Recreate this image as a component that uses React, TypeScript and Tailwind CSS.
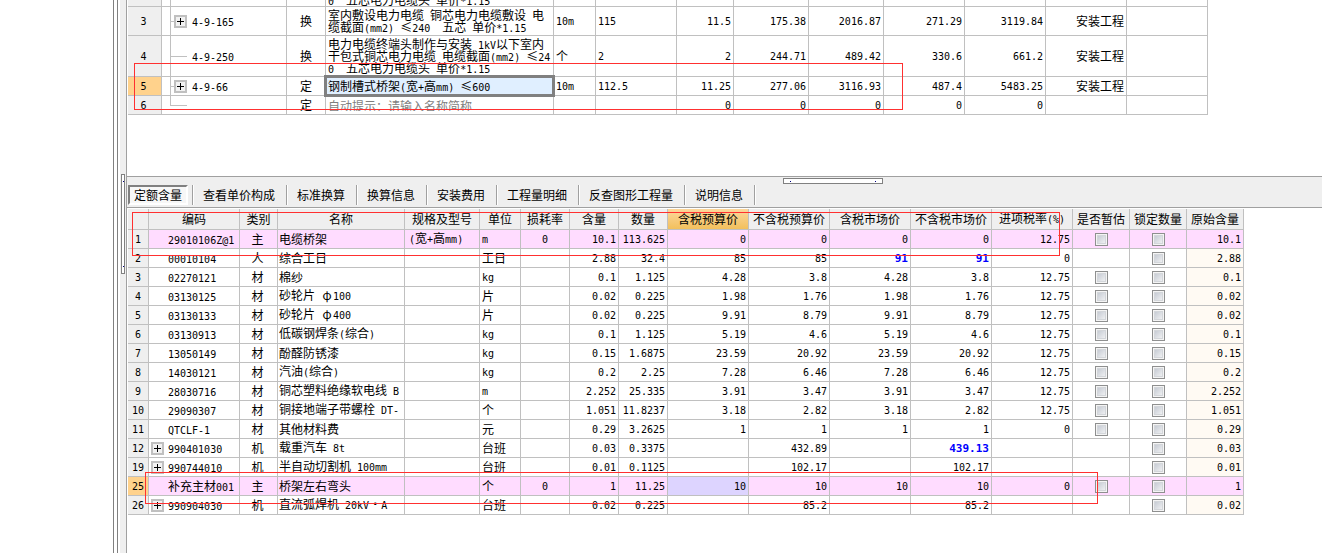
import React from 'react';
import clsx from 'clsx';

type QuotaRow = {
    no: string;
    code: string;
    kind: string;
    name: string[];
    unit: string;
    expr: string;
    nums: string[];
    category: string;
    height: string;
    expandable?: boolean;
    selected?: boolean;
};

type MaterialRow = {
    no: string;
    code: string;
    kind: string;
    name: string;
    spec?: string;
    unit: string;
    loss?: string;
    content: string;
    qty: string;
    prices: string[];
    tax: string;
    estimate?: boolean;
    origin: string;
    main?: boolean;
    selected?: boolean;
    expandable?: boolean;
};

const quotaRows: QuotaRow[] = [
    { no: '3', code: '4-9-165', kind: '换', name: ['室内敷设电力电缆 铜芯电力电缆敷设 电', '缆截面(mm2) ≤240  五芯 单价*1.15'], unit: '10m', expr: '115', nums: ['11.5', '175.38', '2016.87', '271.29', '3119.84'], category: '安装工程', height: 'h-[29px]', expandable: true },
    { no: '4', code: '4-9-250', kind: '换', name: ['电力电缆终端头制作与安装 1kV以下室内', '干包式铜芯电力电缆 电缆截面(mm2) ≤24', '0  五芯电力电缆头 单价*1.15'], unit: '个', expr: '2', nums: ['2', '244.71', '489.42', '330.6', '661.2'], category: '安装工程', height: 'h-[41px]' },
    { no: '5', code: '4-9-66', kind: '定', name: ['钢制槽式桥架(宽+高mm) ≤600'], unit: '10m', expr: '112.5', nums: ['11.25', '277.06', '3116.93', '487.4', '5483.25'], category: '安装工程', height: 'h-[19px]', expandable: true, selected: true },
    { no: '6', code: '', kind: '定', name: [], unit: '', expr: '', nums: ['0', '0', '0', '0', '0'], category: '', height: 'h-[19px]' },
];

const materialRows: MaterialRow[] = [
    { no: '1', code: '29010106Z@1', kind: '主', name: '电缆桥架', spec: '(宽+高mm)', unit: 'm', loss: '0', content: '10.1', qty: '113.625', prices: ['0', '0', '0', '0'], tax: '12.75', estimate: true, origin: '10.1', main: true },
    { no: '2', code: '00010104', kind: '人', name: '综合工日', unit: '工日', content: '2.88', qty: '32.4', prices: ['85', '85', '*91', '*91'], tax: '0', origin: '2.88' },
    { no: '3', code: '02270121', kind: '材', name: '棉纱', unit: 'kg', content: '0.1', qty: '1.125', prices: ['4.28', '3.8', '4.28', '3.8'], tax: '12.75', estimate: true, origin: '0.1' },
    { no: '4', code: '03130125', kind: '材', name: '砂轮片 φ100', unit: '片', content: '0.02', qty: '0.225', prices: ['1.98', '1.76', '1.98', '1.76'], tax: '12.75', estimate: true, origin: '0.02' },
    { no: '5', code: '03130133', kind: '材', name: '砂轮片 φ400', unit: '片', content: '0.02', qty: '0.225', prices: ['9.91', '8.79', '9.91', '8.79'], tax: '12.75', estimate: true, origin: '0.02' },
    { no: '6', code: '03130913', kind: '材', name: '低碳钢焊条(综合)', unit: 'kg', content: '0.1', qty: '1.125', prices: ['5.19', '4.6', '5.19', '4.6'], tax: '12.75', estimate: true, origin: '0.1' },
    { no: '7', code: '13050149', kind: '材', name: '酚醛防锈漆', unit: 'kg', content: '0.15', qty: '1.6875', prices: ['23.59', '20.92', '23.59', '20.92'], tax: '12.75', estimate: true, origin: '0.15' },
    { no: '8', code: '14030121', kind: '材', name: '汽油(综合)', unit: 'kg', content: '0.2', qty: '2.25', prices: ['7.28', '6.46', '7.28', '6.46'], tax: '12.75', estimate: true, origin: '0.2' },
    { no: '9', code: '28030716', kind: '材', name: '铜芯塑料绝缘软电线 B', unit: 'm', content: '2.252', qty: '25.335', prices: ['3.91', '3.47', '3.91', '3.47'], tax: '12.75', estimate: true, origin: '2.252' },
    { no: '10', code: '29090307', kind: '材', name: '铜接地端子带螺栓 DT-', unit: '个', content: '1.051', qty: '11.8237', prices: ['3.18', '2.82', '3.18', '2.82'], tax: '12.75', estimate: true, origin: '1.051' },
    { no: '11', code: 'QTCLF-1', kind: '材', name: '其他材料费', unit: '元', content: '0.29', qty: '3.2625', prices: ['1', '1', '1', '1'], tax: '0', estimate: true, origin: '0.29' },
    { no: '12', code: '990401030', kind: '机', name: '载重汽车 8t', unit: '台班', content: '0.03', qty: '0.3375', prices: ['', '432.89', '', '*439.13'], tax: '', origin: '0.03', expandable: true },
    { no: '19', code: '990744010', kind: '机', name: '半自动切割机 100mm', unit: '台班', content: '0.01', qty: '0.1125', prices: ['', '102.17', '', '102.17'], tax: '', origin: '0.01', expandable: true },
    { no: '25', code: '补充主材001', kind: '主', name: '桥架左右弯头', unit: '个', loss: '0', content: '1', qty: '11.25', prices: ['10', '10', '10', '10'], tax: '0', estimate: true, origin: '1', main: true, selected: true },
    { no: '26', code: '990904030', kind: '机', name: '直流弧焊机 20kV·A', unit: '台班', content: '0.02', qty: '0.225', prices: ['', '85.2', '', '85.2'], tax: '', origin: '0.02', expandable: true },
];

const tabs = ['定额含量', '查看单价构成', '标准换算', '换算信息', '安装费用', '工程量明细', '反查图形工程量', '说明信息'];

const headers = ['', '编码', '类别', '名称', '规格及型号', '单位', '损耗率', '含量', '数量', '含税预算价', '不含税预算价', '含税市场价', '不含税市场价', '进项税率(%)', '是否暂估', '锁定数量', '原始含量'];

const cell = 'border-r border-b border-[#c0c0c0] p-0 whitespace-pre align-middle';
const left = 'pl-0.5';
const right = 'pr-0.5 text-right';

// Half-width runs take one half of a 12px Chinese character each
const T = ({ children, changed }: { children: string; changed?: boolean }) => (
    <>
        {(children.match(/[\x20-\x7e]+|[≤φ·]|[^\x20-\x7e≤φ·]+/g) || []).map((part, i) => {
            if (/^[\x20-\x7e]/.test(part)) {
                return (
                    <span key={i} className={clsx("font-['DejaVu_Sans_Mono',monospace] leading-[12px]", changed ? 'text-[11px] font-bold text-[#0000ff]' : 'text-[10px]')}>
                        {part}
                    </span>
                );
            }
            if (/^[≤φ·]/.test(part)) {
                return <span key={i} className="inline-block w-3 text-center">{part}</span>;
            }
            return <span key={i}>{part}</span>;
        })}
    </>
);

const Expander = ({ label }: { label: string }) => (
    <button type="button" aria-label={label} className="block w-[13px] h-[13px] shrink-0 border-2 border-[#c0c0c0] bg-[#f2f2f2]">
        <svg viewBox="0 0 9 9" className="block w-[9px] h-[9px]" shapeRendering="crispEdges">
            <path d="M1 4h7v1H1zM4 1h1v7H4z" fill="#000" />
        </svg>
    </button>
);

const Check = ({ label }: { label: string }) => (
    <input
        type="checkbox"
        aria-label={label}
        className="block mx-auto appearance-none w-[13px] h-[13px] border border-[#8e8f8f] bg-linear-to-br from-[#bcc2cc] to-[#fafafa] shadow-[inset_0_0_0_1px_#f4f4f4,inset_0_0_0_2px_#d3d6da]"
    />
);

const QuotaTable = () => (
    <table className="table-fixed w-[1080px] border-separate border-spacing-0">
        <colgroup>
            <col className="w-[34px]" />
            <col className="w-[125px]" />
            <col className="w-[39px]" />
            <col className="w-[228px]" />
            <col className="w-[42px]" />
            <col className="w-[81px]" />
            <col className="w-[57px]" />
            <col className="w-[75px]" />
            <col className="w-[75px]" />
            <col className="w-[81px]" />
            <col className="w-[81px]" />
            <col className="w-[81px]" />
            <col className="w-[81px]" />
        </colgroup>
        <tbody>
            {/* Tail of the row that is scrolled out of view */}
            <tr className="h-[7px]">
                <td className={clsx(cell, 'bg-[#efefef]')} />
                <td className={clsx(cell, 'relative')}>
                    <span className="absolute left-2 inset-y-0 border-l border-[#c0c0c0]" />
                </td>
                <td className={cell} />
                <td className={clsx(cell, left)}>
                    <div className="flex items-end h-[6px] overflow-hidden">
                        <span className="block h-3"><T>0  五芯电力电缆头 单价*1.15</T></span>
                    </div>
                </td>
                {Array.from({ length: 9 }, (_, i) => <td key={i} className={cell} />)}
            </tr>
            {quotaRows.map((row, index) => {
                const last = index === quotaRows.length - 1;
                return (
                    <tr key={row.no} className={row.height}>
                        <td className={clsx(cell, 'pr-0.5 text-center', row.selected ? 'bg-[#ffd28c]' : 'bg-[#efefef]')}><T>{row.no}</T></td>
                        <td className={clsx(cell, 'relative')}>
                            <span className={clsx('absolute left-2 top-0 border-l border-[#c0c0c0]', last ? 'bottom-1/2' : '-bottom-px')} />
                            <span className="absolute left-2 top-1/2 w-[17px] border-t border-[#c0c0c0]" />
                            <div className="relative flex items-center gap-1 pl-3">
                                {row.expandable ? <Expander label={`展开 ${row.code}`} /> : <span className="w-[13px]" />}
                                <span className="pl-px pt-px"><T>{row.code}</T></span>
                            </div>
                        </td>
                        <td className={clsx(cell, 'text-center')}>{row.kind}</td>
                        <td className={clsx(cell, left, 'relative', row.selected && 'bg-[#e0efff]')}>
                            {row.name.map((line) => <span key={line} className="block h-3"><T>{line}</T></span>)}
                            {last && (
                                <input aria-label="名称" placeholder="自动提示：请输入名称简称" className="block w-full h-3 p-0 bg-transparent outline-none placeholder:text-[#7f7f7f]" />
                            )}
                            {row.selected && <span className="absolute -inset-0.5 z-10 border-3 border-[#808080]" />}
                        </td>
                        <td className={clsx(cell, left)}><T>{row.unit}</T></td>
                        <td className={clsx(cell, left)}><T>{row.expr}</T></td>
                        {row.nums.map((n, i) => <td key={i} className={clsx(cell, right)}><T>{n}</T></td>)}
                        <td className={clsx(cell, right)}>{row.category}</td>
                        <td className={cell} />
                    </tr>
                );
            })}
        </tbody>
    </table>
);

const MaterialTable = () => (
    <table className="table-fixed w-[1116px] border-separate border-spacing-0">
        <colgroup>
            <col className="w-[21px]" />
            <col className="w-[91px]" />
            <col className="w-[38px]" />
            <col className="w-[127px]" />
            <col className="w-[75px]" />
            <col className="w-[41px]" />
            <col className="w-[49px]" />
            <col className="w-[49px]" />
            <col className="w-[49px]" />
            <col className="w-[81px]" />
            <col className="w-[81px]" />
            <col className="w-[81px]" />
            <col className="w-[81px]" />
            <col className="w-[81px]" />
            <col className="w-[57px]" />
            <col className="w-[57px]" />
            <col className="w-[57px]" />
        </colgroup>
        <thead>
            <tr className="h-[21px]">
                {headers.map((h) => (
                    <th key={h} scope="col" className={clsx(cell, 'text-center font-normal', h === '含税预算价' ? 'bg-linear-to-b from-[#fcd79b] to-[#f2c05c]' : 'bg-[#efefef]')}>
                        <T>{h}</T>
                    </th>
                ))}
            </tr>
        </thead>
        <tbody>
            {materialRows.map((row) => (
                <tr key={row.no} className={clsx('h-[19px]', row.main && 'bg-[#ffdcff]')}>
                    <td className={clsx(cell, 'text-center', row.selected ? 'bg-[#ffd28c]' : 'bg-[#efefef]')}><T>{row.no}</T></td>
                    <td className={clsx(cell, left)}>
                        <div className="flex items-center gap-1">
                            {row.expandable ? <Expander label={`展开 ${row.code}`} /> : <span className="w-[13px]" />}
                            <span className="pt-px"><T>{row.code}</T></span>
                        </div>
                    </td>
                    <td className={clsx(cell, 'pr-0.5 text-center')}>{row.kind}</td>
                    <td className={clsx(cell, 'pl-px')}><T>{row.name}</T></td>
                    <td className={clsx(cell, 'pl-1')}><T>{row.spec || ''}</T></td>
                    <td className={clsx(cell, left)}><T>{row.unit}</T></td>
                    <td className={clsx(cell, 'text-center')}><T>{row.loss || ''}</T></td>
                    <td className={clsx(cell, right)}><T>{row.content}</T></td>
                    <td className={clsx(cell, right)}><T>{row.qty}</T></td>
                    {row.prices.map((p, i) => (
                        <td key={i} className={clsx(cell, right, row.selected && i === 0 && 'bg-[#ddd4ff]')}>
                            <T changed={p.startsWith('*')}>{p.replace('*', '')}</T>
                        </td>
                    ))}
                    <td className={clsx(cell, right)}><T>{row.tax}</T></td>
                    <td className={cell}>{row.estimate && <Check label={`是否暂估 ${row.code}`} />}</td>
                    <td className={cell}><Check label={`锁定数量 ${row.code}`} /></td>
                    <td className={clsx(cell, right, !row.main && 'bg-[#fffaf3]')}><T>{row.origin}</T></td>
                </tr>
            ))}
        </tbody>
    </table>
);

export default function App() {
    return (
        <div className="relative flex min-h-screen overflow-hidden bg-white text-black text-[12px] leading-[12px] font-['Noto_Sans_CJK_SC',sans-serif]">
            {/* Left panel and splitter */}
            <aside className="w-[114px] shrink-0 border-r border-[#808080]" />
            <div className="w-1 shrink-0 border-r border-[#808080]" />
            <div className="w-[9px] shrink-0 border-l-2 border-r border-l-white border-r-[#a0a0a0] bg-[#efefef] pt-[174px] pl-px">
                <div className="flex flex-col items-end justify-between w-1 h-[100px] py-1.5 border border-[#808080] bg-white">
                    <span className="w-px h-px bg-[#000080]" />
                    <span className="w-px h-px bg-[#000080]" />
                </div>
            </div>

            <main className="flex-1 min-w-0">
                <section className="pl-px pb-[61px] border-b border-[#a0a0a0]">
                    <QuotaTable />
                </section>

                <nav className="relative flex items-center pl-px pt-2 pb-0.5 bg-[#efefef] border-b border-[#a0a0a0]">
                    {tabs.map((tab, i) => (
                        <React.Fragment key={tab}>
                            <button
                                type="button"
                                className={clsx(
                                    'h-5',
                                    i === 0
                                        ? 'mr-1 px-1 border-2 border-t-[#808080] border-l-[#808080] border-r-white border-b-white bg-[#f7f7f7]'
                                        : 'pl-[9px] pr-[11px]'
                                )}
                            >
                                {tab}
                            </button>
                            <span className="h-5 w-0.5 border-l border-[#a0a0a0] bg-white" />
                        </React.Fragment>
                    ))}
                    <div className="absolute top-px left-[656px] flex items-center justify-between w-[100px] h-1.5 px-1.5 border border-[#808080] bg-white">
                        <span className="w-px h-px bg-[#000080]" />
                        <span className="w-px h-px bg-[#000080]" />
                    </div>
                </nav>

                <section className="pl-px pt-px">
                    <MaterialTable />
                </section>
            </main>

            {/* Review marks drawn over the grids */}
            <div className="absolute left-[134px] top-[63px] w-[769px] h-[47px] border border-[#ff3030] pointer-events-none z-20" />
            <div className="absolute left-[132px] top-[212px] w-[928px] h-[44px] border border-[#ff3030] pointer-events-none z-20" />
            <div className="absolute left-[145px] top-[472px] w-[953px] h-[32px] border border-[#ff3030] pointer-events-none z-20" />
        </div>
    );
}
